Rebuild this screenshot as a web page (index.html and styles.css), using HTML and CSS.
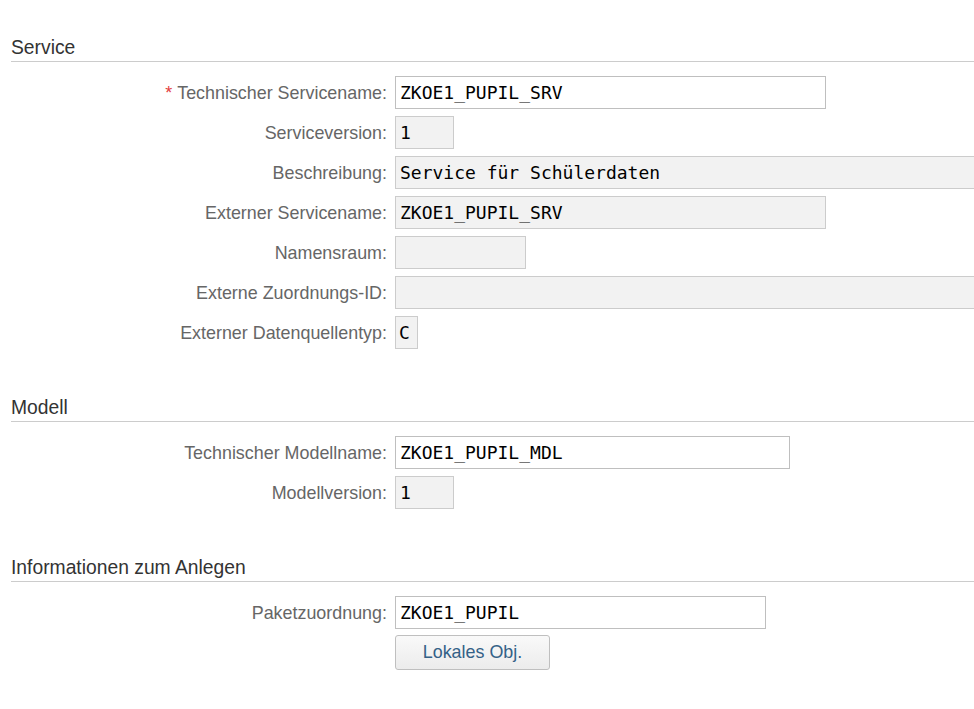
FILE: index.html
```html
<!DOCTYPE html>
<html lang="de">
<head>
<meta charset="utf-8">
<title>Service</title>
<link rel="stylesheet" href="styles.css">
</head>
<body>
<main class="page">
  <section class="group">
    <h2 class="group-title">Service</h2>
    <div class="form">
      <label class="lbl"><span class="req">*</span> Technischer Servicename:</label>
      <div class="field"><input class="inp edit w431" value="ZKOE1_PUPIL_SRV"></div>

      <label class="lbl">Serviceversion:</label>
      <div class="field"><input class="inp ro w59" value="1" readonly></div>

      <label class="lbl">Beschreibung:</label>
      <div class="field"><input class="inp ro wfull" value="Service für Schülerdaten" readonly></div>

      <label class="lbl">Externer Servicename:</label>
      <div class="field"><input class="inp ro w431" value="ZKOE1_PUPIL_SRV" readonly></div>

      <label class="lbl">Namensraum:</label>
      <div class="field"><input class="inp ro w131" value="" readonly></div>

      <label class="lbl">Externe Zuordnungs-ID:</label>
      <div class="field"><input class="inp ro wfull" value="" readonly></div>

      <label class="lbl">Externer Datenquellentyp:</label>
      <div class="field"><input class="inp ro w23" value="C" readonly></div>
    </div>
  </section>

  <section class="group">
    <h2 class="group-title">Modell</h2>
    <div class="form">
      <label class="lbl">Technischer Modellname:</label>
      <div class="field"><input class="inp edit w395" value="ZKOE1_PUPIL_MDL"></div>

      <label class="lbl">Modellversion:</label>
      <div class="field"><input class="inp ro w59" value="1" readonly></div>
    </div>
  </section>

  <section class="group">
    <h2 class="group-title">Informationen zum Anlegen</h2>
    <div class="form">
      <label class="lbl">Paketzuordnung:</label>
      <div class="field"><input class="inp edit w371" value="ZKOE1_PUPIL"></div>

      <span class="lbl"></span>
      <div class="field"><button class="btn" type="button">Lokales Obj.</button></div>
    </div>
  </section>
</main>
</body>
</html>
```

FILE: styles.css
```css
html, body {
  margin: 0;
  padding: 0;
  background: #ffffff;
  overflow: hidden;
}

.page {
  padding: 35px 0 0 11px;
  font-family: "Liberation Sans", Arial, sans-serif;
}

.group + .group {
  margin-top: 46px;
}

.group-title {
  margin: 0;
  font-size: 19.3px;
  font-weight: normal;
  line-height: 24px;
  height: 24px;
  color: #333333;
  padding: 1px 0 1px 0;
  border-bottom: 1px solid #cccccc;
}

.form {
  margin-top: 14px;
  display: grid;
  grid-template-columns: 376px 1fr;
  column-gap: 8px;
  row-gap: 7px;
}

.lbl {
  box-sizing: border-box;
  display: flex;
  align-items: center;
  justify-content: flex-end;
  height: 33px;
  padding-top: 2px;
  font-size: 17.9px;
  color: #666666;
  white-space: nowrap;
}

.req {
  color: #e34040;
  margin-right: 5px;
}

.field {
  display: flex;
  align-items: flex-start;
  min-width: 0;
}

.inp {
  box-sizing: border-box;
  height: 33px;
  margin: 0;
  padding: 0 0 0 4px;
  font-family: "DejaVu Sans Mono", "Liberation Mono", monospace;
  font-size: 18px;
  color: #000000;
  border: 1px solid #bfbfbf;
  border-radius: 0;
  outline: none;
  flex: none;
}

.edit {
  background: #ffffff;
}

.ro {
  background: #f2f2f2;
  border-color: #cccccc;
}

.w23 { width: 23px; padding-left: 3px; }
.w59 { width: 59px; }
.w131 { width: 131px; }
.w371 { width: 371px; }
.w395 { width: 395px; }
.w431 { width: 431px; }
.wfull { width: 620px; }

.btn {
  box-sizing: border-box;
  margin-top: -1px;
  width: 155px;
  height: 35px;
  font-family: "Liberation Sans", Arial, sans-serif;
  font-size: 17.9px;
  color: #346187;
  background: linear-gradient(#f9f9f9, #ececec);
  border: 1px solid #bfbfbf;
  border-radius: 3px;
  padding: 0;
}
```
